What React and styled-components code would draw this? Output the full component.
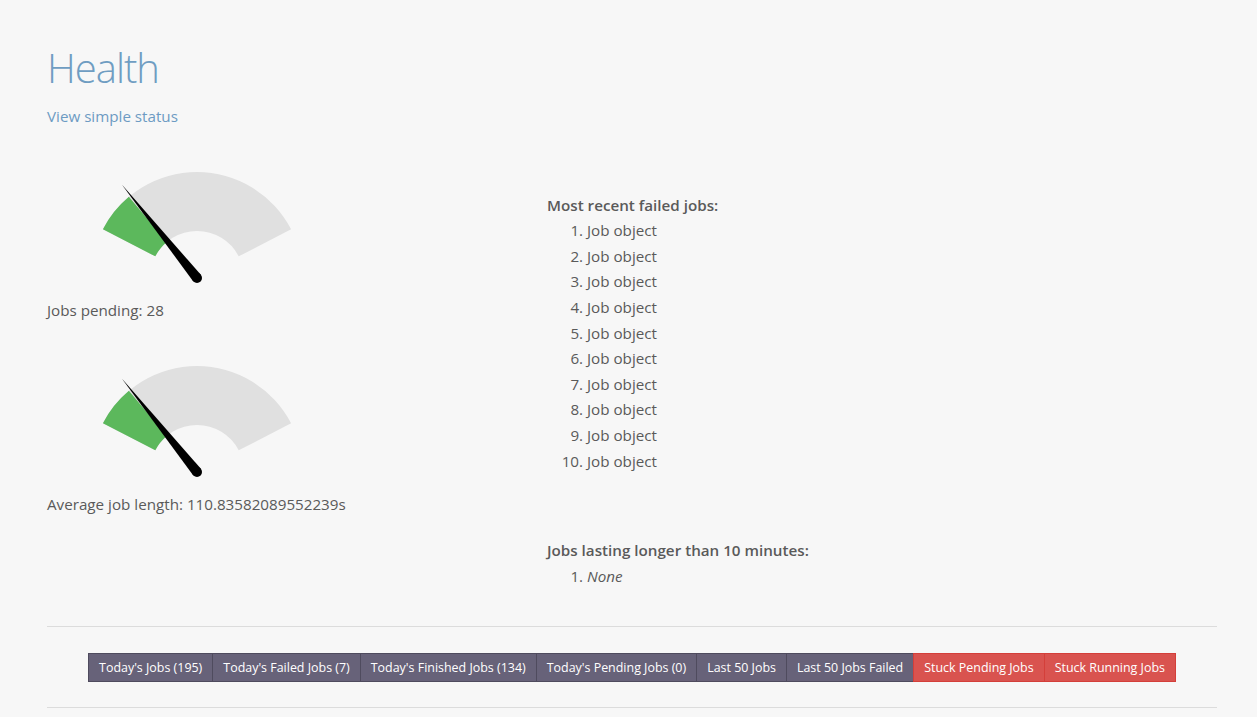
import React from "react";
import styled, { createGlobalStyle } from "styled-components";

const GlobalStyle = createGlobalStyle`
  html, body {
    margin: 0;
    padding: 0;
    background: #f7f7f7;
  }
  body {
    font-family: "Open Sans", "Noto Sans", sans-serif;
    font-size: 15.2px;
    line-height: 25.6px;
    color: #5a5a5a;
  }
`;

const Page = styled.div`
  width: 1170px;
  margin: 0 0 0 47px;
  padding-top: 40px;
`;

const Title = styled.h1`
  margin: 0;
  font-size: 40px;
  font-weight: 300;
  line-height: normal;
  letter-spacing: -1px;
  color: #6f9dc2;
`;

const StatusLink = styled.a`
  display: block;
  margin-top: 9px;
  color: #6d9bc3;
  text-decoration: none;
`;

const Row = styled.div`
  display: grid;
  grid-template-columns: 500px 1fr;
  margin-top: 36px;
`;

const LeftCol = styled.div`
  display: flex;
  flex-direction: column;
  gap: 37px;
`;

const GaugeBlock = styled.div`
  display: flex;
  flex-direction: column;
  gap: 7px;
`;

const RightCol = styled.div`
  padding-top: 27px;
`;

const ListTitle = styled.div`
  font-weight: 600;
  margin-top: ${(p) => (p.$spaced ? "64px" : "0")};
`;

const JobList = styled.ol`
  margin: 0;
  padding-left: 40px;
`;

const Divider = styled.hr`
  border: 0;
  border-top: 1px solid #dcdcdc;
  margin: ${(p) => p.$margin};
`;

const ButtonBar = styled.div`
  display: flex;
  justify-content: center;
`;

const JobButton = styled.button`
  font-family: "Open Sans", "Noto Sans", sans-serif;
  font-size: 12.45px;
  line-height: 27px;
  padding: 0 10px;
  margin-left: -1px;
  color: #fff;
  background: ${(p) => (p.$danger ? "#d9534f" : "#676279")};
  border: 1px solid ${(p) => (p.$danger ? "#d43f3a" : "#4f4b5e")};
  border-radius: 0;
  cursor: pointer;
  white-space: nowrap;
  &:first-child {
    margin-left: 0;
  }
`;

function polar(cx, cy, r, deg) {
  const a = (deg * Math.PI) / 180;
  return [cx + r * Math.sin(a), cy - r * Math.cos(a)];
}

function sector(cx, cy, ro, ri, from, to) {
  const [x1, y1] = polar(cx, cy, ro, from);
  const [x2, y2] = polar(cx, cy, ro, to);
  const [x3, y3] = polar(cx, cy, ri, to);
  const [x4, y4] = polar(cx, cy, ri, from);
  return `M${x1} ${y1} A${ro} ${ro} 0 0 1 ${x2} ${y2} L${x3} ${y3} A${ri} ${ri} 0 0 0 ${x4} ${y4} Z`;
}

const Gauge = ({ needle = -38.8, green = -40 }) => {
  const cx = 150;
  const cy = 112;
  const [tx, ty] = polar(cx, cy, 120, needle);
  const [ax, ay] = polar(cx, cy, 5, needle + 90);
  const [bx, by] = polar(cx, cy, 5, needle - 90);
  return (
    <svg width="250" height="125" viewBox="0 0 250 125">
      <path d={sector(cx, cy, 106, 47, -62.6, 62.6)} fill="#e0e0e0" />
      <path d={sector(cx, cy, 106, 47, -62.6, green)} fill="#5cb85c" />
      <polygon points={`${tx},${ty} ${ax},${ay} ${bx},${by}`} fill="#000" />
      <circle cx={cx} cy={cy} r="5" fill="#000" />
    </svg>
  );
};

const buttons = [
  { label: "Today's Jobs (195)" },
  { label: "Today's Failed Jobs (7)" },
  { label: "Today's Finished Jobs (134)" },
  { label: "Today's Pending Jobs (0)" },
  { label: "Last 50 Jobs" },
  { label: "Last 50 Jobs Failed" },
  { label: "Stuck Pending Jobs", danger: true },
  { label: "Stuck Running Jobs", danger: true },
];

const App = () => {
  const failed = Array.from({ length: 10 }, (_, i) => i);
  return (
    <>
      <GlobalStyle />
      <Page>
        <Title>Health</Title>
        <StatusLink href="#">View simple status</StatusLink>
        <Row>
          <LeftCol>
            <GaugeBlock>
              <Gauge />
              <div>Jobs pending: 28</div>
            </GaugeBlock>
            <GaugeBlock>
              <Gauge />
              <div>Average job length: 110.83582089552239s</div>
            </GaugeBlock>
          </LeftCol>
          <RightCol>
            <ListTitle>Most recent failed jobs:</ListTitle>
            <JobList>
              {failed.map((i) => (
                <li key={i}>Job object</li>
              ))}
            </JobList>
            <ListTitle $spaced>Jobs lasting longer than 10 minutes:</ListTitle>
            <JobList>
              <li>
                <em>None</em>
              </li>
            </JobList>
          </RightCol>
        </Row>
        <Divider $margin="37px 0 26px" />
        <ButtonBar>
          {buttons.map((b) => (
            <JobButton key={b.label} $danger={b.danger}>
              {b.label}
            </JobButton>
          ))}
        </ButtonBar>
        <Divider $margin="25px 0 0" />
      </Page>
    </>
  );
};

export default App;
